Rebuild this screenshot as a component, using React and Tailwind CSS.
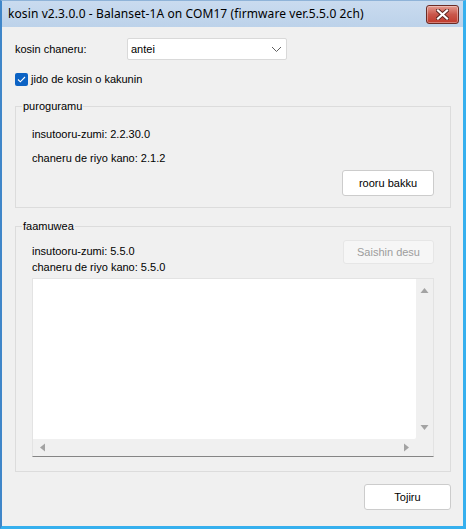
import { useState } from 'react';

const font = { fontFamily: '"Liberation Sans", Arial, sans-serif' };

function CloseButton() {
  return (
    <button
      type="button"
      className="mr-[4px] flex h-[19px] w-[33px] items-center justify-center rounded-[3px] border border-[#6b2b25] bg-gradient-to-b from-[#e3998f] via-[#c9574b] to-[#c0392b] shadow-[inset_0_0_0_1px_rgba(255,255,255,0.35)]"
    >
      <svg width="13" height="11" viewBox="0 0 13 11">
        <path d="M2 1.5 L11 9.5 M11 1.5 L2 9.5" stroke="#5a2520" strokeWidth="4" strokeLinecap="square" />
        <path d="M2 1.5 L11 9.5 M11 1.5 L2 9.5" stroke="#ffffff" strokeWidth="2.2" strokeLinecap="square" />
      </svg>
    </button>
  );
}

function Chevron() {
  return (
    <svg width="11" height="7" viewBox="0 0 11 7" className="mr-[4px]">
      <path d="M1 1 L5.5 5.5 L10 1" fill="none" stroke="#5f5f5f" strokeWidth="1" />
    </svg>
  );
}

function Arrow({ dir }) {
  const shapes = {
    up: 'M0.5 6 L4.5 1 L8.5 6 Z',
    down: 'M0.5 1 L4.5 6 L8.5 1 Z',
    left: 'M6 0.5 L1 4.5 L6 8.5 Z',
    right: 'M1 0.5 L6 4.5 L1 8.5 Z',
  };
  const wide = dir === 'up' || dir === 'down';
  return (
    <svg width={wide ? 9 : 7} height={wide ? 7 : 9} viewBox={wide ? '0 0 9 7' : '0 0 7 9'}>
      <path d={shapes[dir]} fill="#a3a3a3" />
    </svg>
  );
}

function Button({ children, disabled, className }) {
  return (
    <button
      type="button"
      disabled={disabled}
      className={
        'flex items-center justify-center rounded-[3px] border text-[11px] ' +
        (disabled
          ? 'border-[#e6e6e6] bg-[#f6f6f6] text-[#9d9d9d] '
          : 'border-[#cccccc] bg-white text-black ') +
        className
      }
    >
      {children}
    </button>
  );
}

export default function App() {
  const [autoCheck, setAutoCheck] = useState(true);

  return (
    <div
      className="flex h-[529px] w-[466px] flex-col overflow-hidden border-l-[2px] border-r-[3px] border-b-[3px] border-t border-l-[#3f86c9] border-r-[#36b0ee] border-b-[#36b0ee] border-t-[#8fb3d8] bg-[#f0f0f0] text-[11px] text-black"
      style={font}
    >
      {/* title bar */}
      <div className="flex h-[26px] shrink-0 items-center justify-between bg-gradient-to-b from-[#c9dbef] to-[#bcd2ea] pl-[6px]">
        <span className="text-[12px] tracking-[0.1px] text-black" style={{ fontFamily: '"Noto Sans", "Open Sans", sans-serif' }}>
          kosin v2.3.0.0 - Balanset-1A on COM17 (firmware ver.5.5.0 2ch)
        </span>
        <CloseButton />
      </div>

      {/* client area */}
      <div className="flex flex-1 flex-col pl-[13px] pr-[12px]">
        <div className="mt-[11px] flex h-[22px] items-center">
          <span className="w-[112px]">kosin chaneru:</span>
          <div className="flex h-[22px] w-[160px] items-center justify-between rounded-[2px] border border-[#d9d9d9] bg-white pl-[3px]">
            <span>antei</span>
            <Chevron />
          </div>
        </div>

        <label className="mt-[13px] flex h-[13px] items-center" onClick={() => setAutoCheck(!autoCheck)}>
          <span className="flex h-[13px] w-[13px] items-center justify-center rounded-[2px] bg-[#0b62c4]">
            {autoCheck && (
              <svg width="9" height="7" viewBox="0 0 9 7">
                <path d="M1 3.5 L3.3 5.8 L8 1" fill="none" stroke="#ffffff" strokeWidth="1.1" />
              </svg>
            )}
          </span>
          <span className="ml-[3px]">jido de kosin o kakunin</span>
        </label>

        {/* puroguramu */}
        <fieldset className="mt-[14px] h-[108px] border border-[#dcdcdc] px-0">
          <legend className="ml-[6px] px-[1px] leading-[13px]">puroguramu</legend>
          <div className="flex flex-col pl-[16px] pr-[16px]">
            <span className="mt-[15px] leading-[13px]">insutooru-zumi: 2.2.30.0</span>
            <span className="mt-[11px] leading-[13px]">chaneru de riyo kano: 2.1.2</span>
            <div className="mt-[5px] flex justify-end">
              <Button className="h-[26px] w-[92px]">rooru bakku</Button>
            </div>
          </div>
        </fieldset>

        {/* faamuwea */}
        <fieldset className="mt-[12px] h-[252px] border border-[#dcdcdc] px-0">
          <legend className="ml-[6px] px-[1px] leading-[13px]">faamuwea</legend>
          <div className="flex flex-col pl-[16px] pr-[16px]">
            <div className="mt-[7px] flex items-start justify-between">
              <div className="flex flex-col pt-[5px]">
                <span className="leading-[13px]">insutooru-zumi: 5.5.0</span>
                <span className="mt-[3px] leading-[13px]">chaneru de riyo kano: 5.5.0</span>
              </div>
              <Button disabled className="h-[24px] w-[91px]">Saishin desu</Button>
            </div>

            <div className="mt-[4px] grid h-[179px] grid-cols-[1fr_17px] grid-rows-[1fr_17px] border border-[#e3e3e3] border-b-[#858585] bg-[#f0f0f0]">
              <div className="rounded-br-[2px] bg-white" />
              <div className="flex flex-col items-center justify-between py-[8px]">
                <Arrow dir="up" />
                <Arrow dir="down" />
              </div>
              <div className="flex items-center justify-between px-[6px]">
                <Arrow dir="left" />
                <Arrow dir="right" />
              </div>
              <div />
            </div>
          </div>
        </fieldset>

        <div className="mt-[12px] flex justify-end">
          <Button className="h-[26px] w-[87px]">Tojiru</Button>
        </div>
      </div>
    </div>
  );
}
